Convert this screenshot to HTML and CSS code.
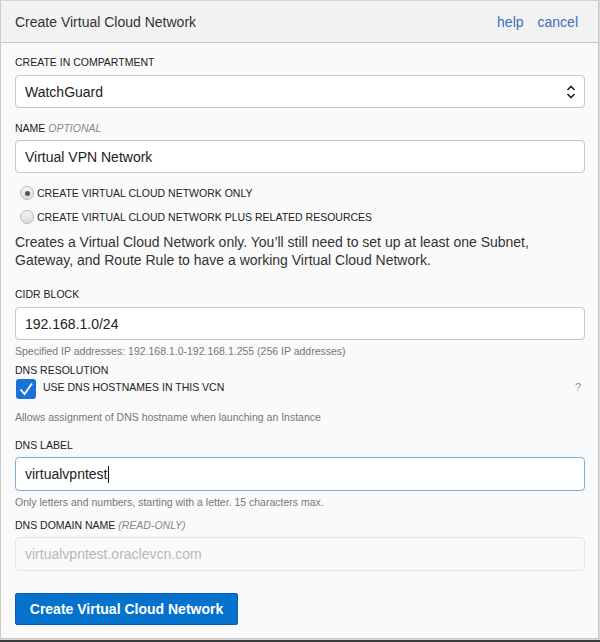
FILE: index.html
```html
<!DOCTYPE html>
<html>
<head>
<meta charset="utf-8">
<link rel="stylesheet" href="styles.css">
</head>
<body>
<div class="dialog">
  <div class="header">
    <div class="title">Create Virtual Cloud Network</div>
    <div class="links"><span class="link">help</span><span class="link">cancel</span></div>
  </div>
  <div class="content">
    <div class="label first">CREATE IN COMPARTMENT</div>
    <div class="field select">
      <span>WatchGuard</span>
      <svg class="chev" width="10" height="16" viewBox="0 0 10 16"><path d="M1.5 6 L5 2.5 L8.5 6" fill="none" stroke="#222" stroke-width="1.6"/><path d="M1.5 10 L5 13.5 L8.5 10" fill="none" stroke="#222" stroke-width="1.6"/></svg>
    </div>

    <div class="label gap">NAME <em>OPTIONAL</em></div>
    <div class="field">Virtual VPN Network</div>

    <div class="radio-row r1"><span class="radio checked"></span><span class="rtext">CREATE VIRTUAL CLOUD NETWORK ONLY</span></div>
    <div class="radio-row"><span class="radio"></span><span class="rtext">CREATE VIRTUAL CLOUD NETWORK PLUS RELATED RESOURCES</span></div>
    <p class="desc">Creates a Virtual Cloud Network only. You’ll still need to set up at least one Subnet, Gateway, and Route Rule to have a working Virtual Cloud Network.</p>

    <div class="label cidr">CIDR BLOCK</div>
    <div class="field">192.168.1.0/24</div>
    <div class="help h1">Specified IP addresses: 192.168.1.0-192.168.1.255 (256 IP addresses)</div>

    <div class="label dnsres">DNS RESOLUTION</div>
    <div class="check-row">
      <span class="checkbox"><svg width="20" height="20" viewBox="0 0 20 20"><path d="M4.5 10.5 L8.5 15 L16 4.5" fill="none" stroke="#fff" stroke-width="1.8"/></svg></span>
      <span class="ctext">USE DNS HOSTNAMES IN THIS VCN</span>
      <span class="q">?</span>
    </div>
    <div class="help h2">Allows assignment of DNS hostname when launching an Instance</div>

    <div class="label dnslabel">DNS LABEL</div>
    <div class="field focus">virtualvpntest<span class="caret"></span></div>
    <div class="help h3">Only letters and numbers, starting with a letter. 15 characters max.</div>

    <div class="label domain">DNS DOMAIN NAME <em>(READ-ONLY)</em></div>
    <div class="field disabled">virtualvpntest.oraclevcn.com</div>

    <button class="btn">Create Virtual Cloud Network</button>
  </div>
</div>
</body>
</html>
```

FILE: styles.css
```css
html, body {
  margin: 0;
  padding: 0;
}
body {
  background: #3c3c3c;
  width: 600px;
  height: 642px;
  overflow: hidden;
  font-family: "Liberation Sans", Arial, sans-serif;
  color: #333;
}
.dialog {
  width: 597px;
  height: 637px;
  background: #fafafa;
  border: 1px solid #c9c9c9;
  border-top: 1px solid #d4d4d4;
  box-sizing: content-box;
  background-clip: padding-box;
  margin-right: 1px;
  outline: 1px solid #d8d8d8;
}
.header {
  height: 42px;
  background: #f2f2f2;
  border-bottom: 1px solid #c8c8c8;
  display: flex;
  align-items: center;
  justify-content: space-between;
  padding: 0 20px 0 14px;
  box-sizing: border-box;
}
.title {
  font-size: 14px;
  color: #333;
}
.links {
  display: flex;
  gap: 14px;
  font-size: 14px;
  margin-top: 1px;
}
.link {
  color: #3a6fc0;
}
.content {
  padding: 12px 13px 0 14px;
}
.label {
  font-size: 10.5px;
  line-height: 14px;
  color: #222;
  margin-bottom: 6px;
}
.label em {
  color: #888;
  font-style: italic;
}
.gap { margin-top: 13px; margin-bottom: 5px; }
.field {
  height: 33px;
  box-sizing: border-box;
  border: 1px solid #c8c8c8;
  border-radius: 4px;
  background: #fff;
  font-size: 14px;
  color: #222;
  display: flex;
  align-items: center;
  padding: 0 9px;
  position: relative;
}
.select {
  justify-content: space-between;
  padding-right: 8px;
}
.chev { display: block; }
.radio-row {
  height: 24px;
  display: flex;
  align-items: center;
  padding-left: 5px;
}
.r1 { margin-top: 8px; }
.radio {
  width: 12px;
  height: 12px;
  border-radius: 50%;
  border: 1px solid #b8b8b8;
  background: linear-gradient(#f4f4f4, #dcdcdc);
  margin-right: 3px;
  position: relative;
  flex: none;
}
.radio.checked::after {
  content: "";
  position: absolute;
  left: 3.5px;
  top: 3.5px;
  width: 5px;
  height: 5px;
  border-radius: 50%;
  background: #555;
}
.rtext {
  font-size: 10.5px;
  color: #222;
}
.desc {
  margin: 4px 0 0 0;
  font-size: 14px;
  line-height: 18px;
  color: #333;
  padding-right: 20px;
}
.cidr { margin-top: 18px; }
.help {
  font-size: 10.5px;
  line-height: 14px;
  color: #777;
}
.h1 { margin-top: 4px; }
.dnsres { margin-top: 5px; margin-bottom: 2px; }
.check-row {
  display: flex;
  align-items: center;
  height: 20px;
  padding-left: 1px;
}
.checkbox {
  width: 20px;
  height: 20px;
  border-radius: 3px;
  background: #1b72d6;
  flex: none;
}
.checkbox svg { display: block; }
.ctext {
  font-size: 10.5px;
  color: #222;
  margin-left: 7px;
  margin-top: -4px;
  flex: 1;
}
.q {
  font-size: 11px;
  color: #8c8c8c;
  margin-right: 4px;
  margin-top: -5px;
}
.h2 { margin-top: 11px; }
.dnslabel { margin-top: 14px; margin-bottom: 5px; }
.focus {
  height: 34px;
  border-color: #7ea9dc;
}
.caret {
  display: inline-block;
  width: 1px;
  height: 17px;
  background: #111;
  margin-left: 1px;
}
.h3 { margin-top: 4px; }
.domain { margin-top: 9px; margin-bottom: 5px; }
.disabled {
  height: 34px;
  background: #fafafa;
  border-color: #e6e6e6;
  color: #b8b8b8;
}
.btn {
  margin-top: 22px;
  height: 32px;
  width: 223px;
  background: #0572ce;
  border: 1px solid #0a5fb0;
  border-radius: 2px;
  color: #fff;
  font-family: "Liberation Sans", Arial, sans-serif;
  font-weight: bold;
  font-size: 14px;
  padding: 0;
  display: block;
}
```
